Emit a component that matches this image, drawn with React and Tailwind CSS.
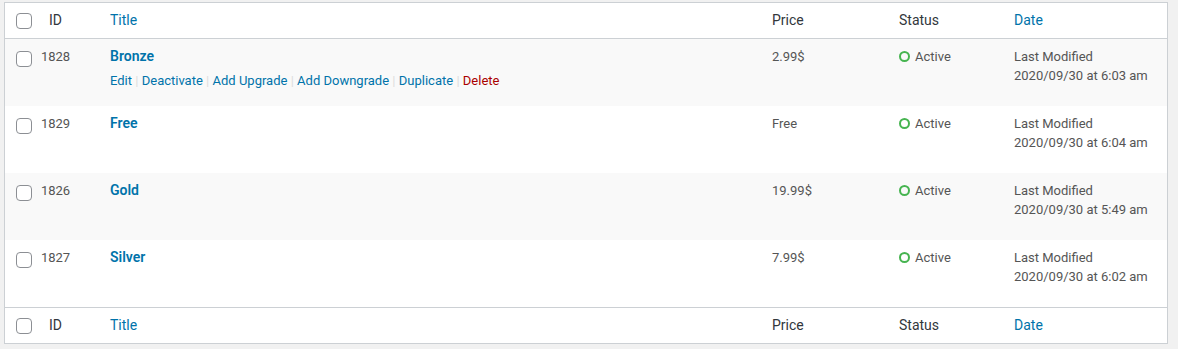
import React from "react";

const plans = [
  { id: 1828, title: "Bronze", price: "2.99$", date: "2020/09/30 at 6:03 am", actions: true },
  { id: 1829, title: "Free", price: "Free", date: "2020/09/30 at 6:04 am" },
  { id: 1826, title: "Gold", price: "19.99$", date: "2020/09/30 at 5:49 am" },
  { id: 1827, title: "Silver", price: "7.99$", date: "2020/09/30 at 6:02 am" },
];

const cols = "grid grid-cols-[33px_35px_1fr_127px_115px_163px]";

function Checkbox() {
  return <span className="block h-4 w-4 rounded-[4px] border border-[#8c8f94] bg-white" />;
}

function HeadRow({ border }) {
  return (
    <div className={`${cols} h-[36px] items-center text-[14px] text-[#32373c] ${border}`}>
      <div className="pl-[11px]">
        <Checkbox />
      </div>
      <div className="text-center">ID</div>
      <div className="pl-[37px] text-[#0073aa]">Title</div>
      <div className="pl-[10px]">Price</div>
      <div className="pl-[10px]">Status</div>
      <div className="pl-[10px] text-[#0073aa]">Date</div>
    </div>
  );
}

function RowActions() {
  const items = ["Edit", "Deactivate", "Add Upgrade", "Add Downgrade", "Duplicate"];
  return (
    <div className="mt-[5px] text-[13px] leading-[19px]">
      {items.map((a) => (
        <span key={a}>
          <span className="text-[#0073aa]">{a}</span>
          <span className="px-[3.25px] text-[#dddddd]">|</span>
        </span>
      ))}
      <span className="text-[#aa0000]">Delete</span>
    </div>
  );
}

export default function App() {
  return (
    <div className="min-h-[349px] bg-[#f1f1f1] pl-1 pt-[2px] font-['Roboto',sans-serif]">
      <div className="w-[1164px] border border-[#ccd0d4] bg-white">
        <HeadRow border="border-b border-[#ccd0d4]" />

        {plans.map((p, i) => (
          <div
            key={p.id}
            className={`${cols} h-[67px] text-[13px] leading-[19px] text-[#555] ${i % 2 === 0 ? "bg-[#f9f9f9]" : "bg-white"}`}
          >
            <div className="pl-[11px] pt-3">
              <Checkbox />
            </div>
            <div className="pt-2 text-center">{p.id}</div>
            <div className="pl-[37px] pt-2">
              <div className="text-[14px] font-semibold text-[#0073aa]">{p.title}</div>
              {p.actions && <RowActions />}
            </div>
            <div className="pl-[10px] pt-2">{p.price}</div>
            <div className="flex items-start gap-[5px] pl-[10px] pt-2">
              <span className="mt-[4px] h-[11px] w-[11px] rounded-full border-2 border-[#46b450]" />
              <span>Active</span>
            </div>
            <div className="pl-[10px] pt-2">
              <div>Last Modified</div>
              <div>{p.date}</div>
            </div>
          </div>
        ))}

        <HeadRow border="border-t border-[#ccd0d4]" />
      </div>
    </div>
  );
}
